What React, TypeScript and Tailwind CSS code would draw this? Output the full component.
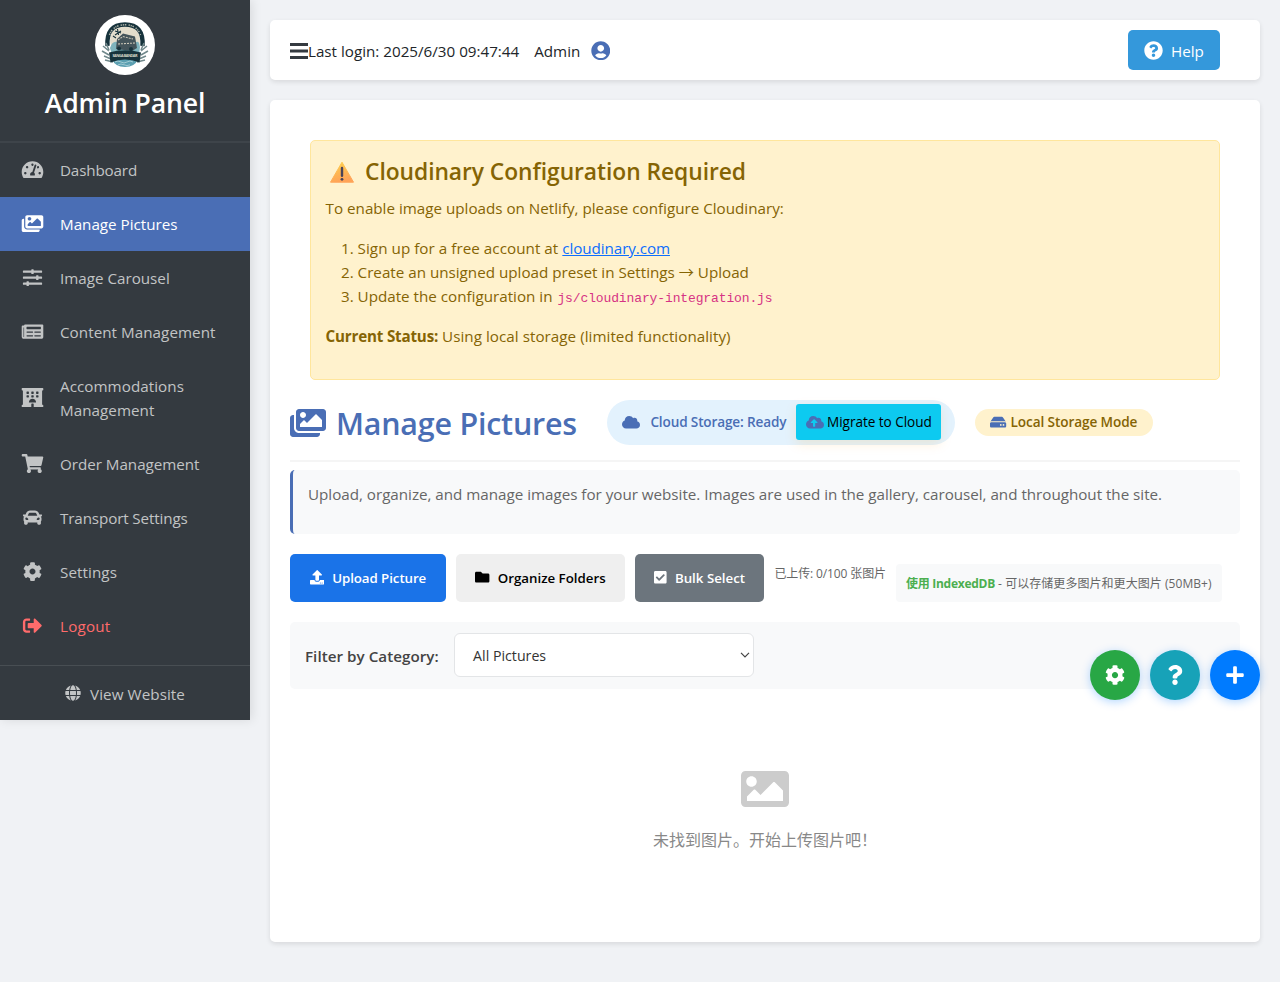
import type { IconType } from "react-icons";
import {
  FaCar, FaCheckSquare, FaCloud, FaCloudUploadAlt, FaCog, FaFolder, FaGlobe, FaHdd, FaHotel, FaImage, FaImages,
  FaNewspaper, FaPlus, FaQuestion, FaQuestionCircle, FaShoppingCart, FaSignOutAlt, FaSlidersH, FaTachometerAlt, FaUpload, FaUserCircle,
} from "react-icons/fa";

type NavItem = { icon: IconType; label: string; text?: string; row?: string };

const idle = "text-[#c2c4c5]";

const nav: NavItem[] = [
  { icon: FaTachometerAlt, label: "Dashboard", text: "tracking-[-0.15px]" },
  { icon: FaImages, label: "Manage Pictures", row: "bg-[#4a6eb5] text-white" },
  { icon: FaSlidersH, label: "Image Carousel" },
  { icon: FaNewspaper, label: "Content Management", text: "tracking-[0.05px]" },
  { icon: FaHotel, label: "Accommodations Management", text: "tracking-[0.05px]" },
  { icon: FaShoppingCart, label: "Order Management", text: "tracking-[-0.03px]" },
  { icon: FaCar, label: "Transport Settings", text: "tracking-[-0.12px]" },
  { icon: FaCog, label: "Settings", text: "tracking-[0.08px]" },
  { icon: FaSignOutAlt, label: "Logout", text: "tracking-[0.2px]", row: "text-[#ff6b6b]" },
];

function Logo() {
  return (
    <svg viewBox="0 0 60 60" className="size-[60px] rounded-full bg-white">
      <circle cx="30" cy="25" r="15" fill="#e3ddcc" />
      <path d="M15 33 Q18 24 24 28 L40 28 Q44 24 45 32 L44 40 H17Z" fill="#7fb4bd" />
      <path d="M12.500 31 Q11 9.500 30 9.500 T47.500 31" fill="none" stroke="#17333c" strokeWidth="4.400" />
      <path d="M14.500 20 Q18 9.800 30 9.800 T45.500 20" fill="none" stroke="#a9aea4" strokeWidth="1.500" strokeDasharray="1.400 0.8 1.200 0.7 1.500 2.200" />
      <path d="M22 24 L28 18.500 L40 21.500 L42 33 L37 36 L21 34Z" fill="#44545a" />
      <path d="M23 25 L28 21.500 L38 24 M23 29 L40 28" stroke="#c9c5b6" strokeWidth="1.100" strokeDasharray="2 1" fill="none" />
      <circle cx="24" cy="33.500" r="2" fill="#17333c" />
      <circle cx="36" cy="34" r="2" fill="#17333c" />
      <path d="M22.500 14 l1 6 M20 16 l6 2 M20 20 l6 -4 M18 21 l3 2" stroke="#17333c" strokeWidth="1.100" />
      <path d="M8 31 l6 5 M7 36 l7 4 M9 41 l7 3 M11 28 l3 7 M10 45 l8 2 M52 31 l-6 5 M53 36 l-7 4 M51 41 l-7 3 M49 28 l-3 7 M50 45 l-8 2" stroke="#70888b" strokeWidth="1.500" />
      <path d="M17 44 Q30 40 43 44 Q40 52 30 52 Q20 52 17 44Z" fill="#5b9fb1" />
      <path d="M20 47 q3 -2 6 0 t6 0 t6 0 M23 49.800 q3 -1.500 6 0 t6 0" stroke="#b5d6dc" strokeWidth="0.8" fill="none" />
      <path d="M14 37.500 Q30 33 46 37.500 L44.500 47.500 Q30 41.500 15.500 47.500Z" fill="#17333c" />
      <text x="30" y="42.300" textAnchor="middle" fill="#d8d6c8" fontSize="3.800" fontWeight="700" fontFamily="Open Sans" textLength="25">SANGA BANDAR</text>
    </svg>
  );
}

function WarningSign() {
  return (
    <svg viewBox="0 0 26 22" className="h-[22px] w-[26px]">
      <defs>
        <linearGradient id="amber" x1="0" y1="0" x2="0.3" y2="1">
          <stop offset="0" stopColor="#fdd24d" />
          <stop offset="1" stopColor="#ffa357" />
        </linearGradient>
      </defs>
      <path d="M13 1.200 L24.500 21.200 H1.500Z" fill="url(#amber)" stroke="url(#amber)" strokeLinejoin="round" />
      <path d="M13 7 V14.800" stroke="#4a4358" strokeWidth="2.400" strokeLinecap="round" />
      <circle cx="13" cy="18.300" r="1.400" fill="#4a4358" />
    </svg>
  );
}

function Sidebar() {
  return (
    <aside className="flex h-[720px] w-[250px] shrink-0 flex-col bg-[#343a40] shadow-[2px_0_10px_rgba(0,0,0,0.1)]">
      <div className="flex h-[142.6px] flex-col items-center border-b-2 border-white/5 pt-[15px]">
        <Logo />
        <h3 className="mt-[11px] text-[26.6px] leading-[34px] font-semibold tracking-[-0.15px] text-white">Admin Panel</h3>
      </div>
      <nav>
        {nav.map((n) => (
          <a key={n.label} className={`flex items-center px-5 py-[15px] ${n.row ?? idle}`}>
            <n.icon className="mr-[15px] h-[19.2px] w-[25px] shrink-0" />
            <span className={n.text}>{n.label}</span>
          </a>
        ))}
      </nav>
      <a className={`mt-auto flex items-center justify-center gap-[9px] border-t border-white/10 pt-4 pb-[14px] ${idle}`}>
        <FaGlobe className="relative -top-px size-4" />
        <span className="tracking-[0.08px]">View Website</span>
      </a>
    </aside>
  );
}

function TopBar() {
  return (
    <header className="flex h-[60px] shrink-0 items-center rounded-[5px] bg-white pr-10 pl-5 shadow-[0_2px_5px_rgba(0,0,0,0.1)]">
      <svg viewBox="0 0 18 16" className="mt-px h-4 w-[18px] shrink-0">
        <path d="M0 1.500H18M0 8H18M0 14.500H18" stroke="#343a40" strokeWidth="2.800" />
      </svg>
      <span className="mt-[2px]">Last login: 2025/6/30 09:47:44</span>
      <span className="mt-[2px] ml-[15px]">Admin</span>
      <FaUserCircle className="mt-px ml-[10.5px] size-[19.5px] text-[#4a6eb5]" />
      <button className="ml-auto flex h-10 w-[92px] items-center justify-center gap-2 rounded-[5px] bg-[#3498db] text-white">
        <FaQuestionCircle className="size-[19px]" />
        <span className="mt-[2px]">Help</span>
      </button>
    </header>
  );
}

function Notice() {
  return (
    <section className="mx-[19.6px] mt-5 mb-[20.4px] h-[239.6px] rounded-[5px] border border-[#ffe69c] bg-[#fff2cd] p-[15px] text-[#856404]">
      <h4 className="flex h-8 items-center pl-[3.4px] text-[22.8px] font-semibold tracking-[-0.05px]">
        <WarningSign />
        <span className="ml-[10px]">Cloudinary Configuration Required</span>
      </h4>
      <p className="mt-2">To enable image uploads on Netlify, please configure Cloudinary:</p>
      <ol className="mt-4 list-decimal pl-8">
        <li>
          <span className="tracking-[0.05px]">Sign up for a free account at </span>
          <a className="tracking-[-0.08px] text-[#0d6efd] underline">cloudinary.com</a>
        </li>
        <li>Create an unsigned upload preset in Settings → Upload</li>
        <li className="h-6">
          Update the configuration in{" "}
          <code className="ml-px font-['Liberation_Mono',monospace] text-[13px] leading-none tracking-[-0.12px] text-[#d63384]">js/cloudinary-integration.js</code>
        </li>
      </ol>
      <p className="mt-4">
        <strong className="tracking-[-0.2px]">Current Status:</strong>{" "}
        <span className="tracking-[0.04px]">Using local storage (limited functionality)</span>
      </p>
    </section>
  );
}

function PageTitle() {
  return (
    <div className="flex h-[61.6px] items-start border-b-2 border-[#f5f5f5]">
      <h2 className="flex h-[46px] items-center text-[30.4px] font-semibold tracking-[-0.2px] text-[#4a6eb5]">
        <FaImages className="h-8 w-9 shrink-0" />
        <span className="mt-[2px] ml-[10px] w-[271.4px] whitespace-nowrap">Manage Pictures</span>
      </h2>
      <div className="flex h-[45px] w-[348px] items-center rounded-[23px] bg-[#e3f2fd] pl-[15px] text-[13.6px] text-[#4a6eb5]">
        <FaCloud className="h-[14.4px] w-[18px] shrink-0" />
        <span className="ml-[10px] w-[136px] font-semibold tracking-[-0.15px] whitespace-nowrap">Cloud Storage: Ready</span>
        <button className="ml-[10px] flex h-9 w-[145px] items-center justify-center gap-[3px] rounded-[3px] bg-[#0dcaf0] shadow-[0_4px_12px_rgba(255,152,0,0.15)]">
          <FaCloudUploadAlt className="h-[14.4px] w-[18px] shrink-0" />
          <span className="tracking-[-0.05px] whitespace-nowrap text-black">Migrate to Cloud</span>
        </button>
      </div>
      <div className="mt-[9px] ml-5 flex h-[27px] w-[178px] items-center rounded-full bg-[#fff2cd] pl-[15px] text-[13.6px] font-semibold tracking-[-0.1px] text-[#856404]">
        <FaHdd className="h-[14.4px] w-[16.2px] shrink-0 text-[#4a6eb5]" />
        <span className="ml-[4px] whitespace-nowrap">Local Storage Mode</span>
      </div>
    </div>
  );
}

const actionButton = "flex h-12 items-center justify-center gap-2 rounded-[5px]";

function Actions() {
  return (
    <div className="mt-5 flex h-12 gap-[10px] text-[13.3px] font-semibold">
      <button className={`${actionButton} w-[156px] bg-[#1a73e8] tracking-[-0.07px] text-white`}>
        <FaUpload className="size-[14.4px]" /> <span>Upload Picture</span>
      </button>
      <button className={`${actionButton} w-[169px] bg-[#efefef] text-black`}>
        <FaFolder className="size-[14.4px]" /> <span>Organize Folders</span>
      </button>
      <button className={`${actionButton} w-[129.4px] bg-[#6c757d] text-white`}>
        <FaCheckSquare className="h-[14.4px] w-[12.6px]" /> <span>Bulk Select</span>
      </button>
      <div className="mt-[10px] h-5 text-[12px] leading-5 font-normal tracking-[-0.12px] whitespace-nowrap text-[#666]">已上传: 0/100 张图片</div>
      <div className="mt-[10px] h-[38px] w-[326px] rounded-[4px] bg-[#f8f9fa] pl-[10px] text-[12px] leading-[39px] font-normal whitespace-nowrap text-[#666]">
        <strong className="tracking-[-0.27px] text-[#4caf50]">使用 IndexedDB</strong> <span className="tracking-[0.05px]">- 可以存储更多图片和更大图片 (50MB+)</span>
      </div>
    </div>
  );
}

function Filter() {
  return (
    <div className="mt-5 flex h-[67px] items-center rounded-[5px] bg-[#f8f9fa] pl-[15px]">
      <label className="mt-px w-[148.5px] font-semibold tracking-[0.03px] text-[#444]">Filter by Category:</label>
      <div className="flex h-11 w-[300px] items-center justify-between rounded-[6px] border-[1.6px] border-[#e3e5e7] bg-white pr-[3px] pl-[18.6px] text-[#333]">
        <span className="mt-px text-[14.2px]">All Pictures</span>
        <svg viewBox="0 0 10 6" className="h-[6px] w-[10px]">
          <path d="M1 0.8 L5 4.800 L9 0.8" fill="none" stroke="#444" strokeWidth="1.200" />
        </svg>
      </div>
    </div>
  );
}

const fab = "grid size-[50px] place-items-center rounded-full text-[20px] text-white shadow-[0_2px_10px_rgba(0,123,255,0.3)]";

export default function App() {
  return (
    <div className="relative flex h-[982px] items-start overflow-hidden bg-[#f0f2f5] font-['Open_Sans','Noto_Sans_CJK_SC',sans-serif] text-[15.2px] leading-6 text-[#212529]">
      <Sidebar />
      <main className="flex min-w-0 flex-1 flex-col gap-5 p-5">
        <TopBar />
        <div className="h-[842px] rounded-[5px] bg-white p-5 shadow-[0_2px_5px_rgba(0,0,0,0.1)]">
          <Notice />
          <PageTitle />
          <p className="mt-2 h-16 rounded-[5px] border-l-[3px] border-[#4a6eb5] bg-[#f8f9fa] pt-3 pl-[15px] tracking-[-0.015px] whitespace-nowrap text-[#666]">
            Upload, organize, and manage images for your website. Images are used in the gallery, carousel, and throughout the site.
          </p>
          <Actions />
          <Filter />
          <div className="flex flex-col items-center pt-[76.4px]">
            <FaImage className="size-12 text-[#ccc]" />
            <p className="mt-[15px] text-[16px] text-[#888]">未找到图片。开始上传图片吧！</p>
          </div>
        </div>
      </main>
      <div className="absolute top-[650px] right-5 flex gap-[10px]">
        <button className={`${fab} bg-[#28a745]`}><FaCog /></button>
        <button className={`${fab} bg-[#17a2b8]`}><FaQuestion /></button>
        <button className={`${fab} bg-[#007bff]`}><FaPlus /></button>
      </div>
    </div>
  );
}
